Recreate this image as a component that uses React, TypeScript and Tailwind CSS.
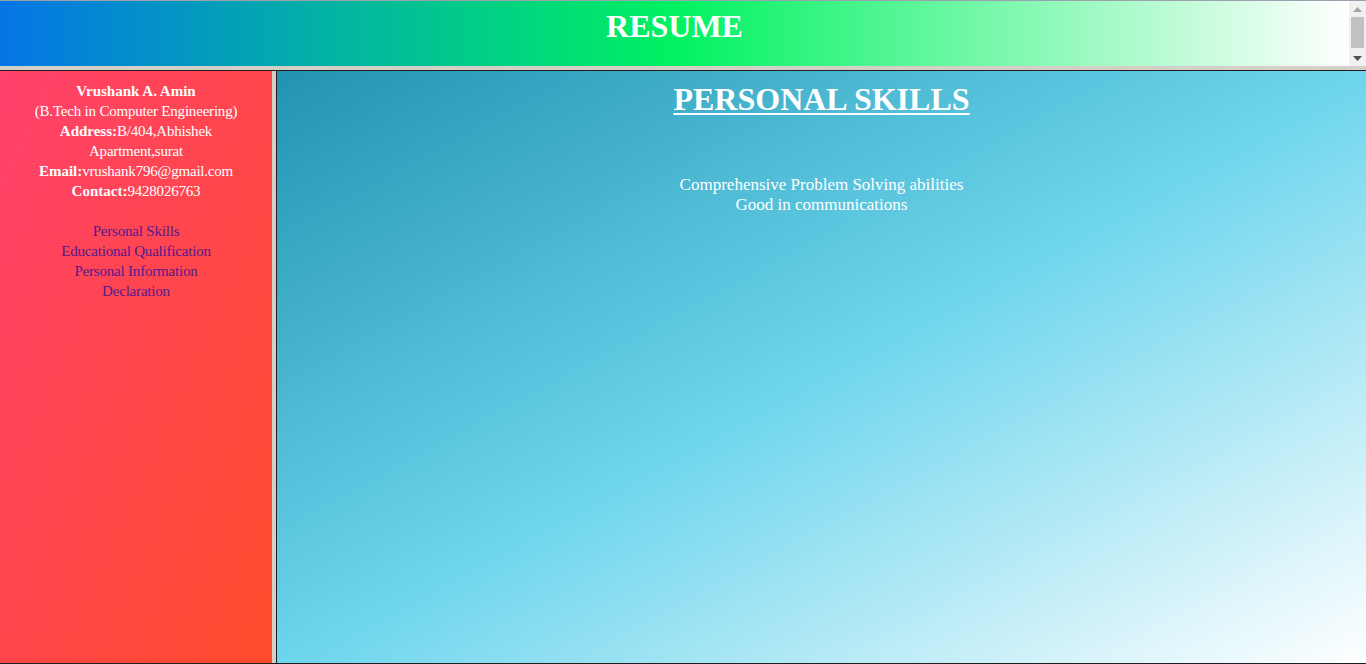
const links = [
  'Personal Skills',
  'Educational Qualification',
  'Personal Information',
  'Declaration',
];

const skills = ['Comprehensive Problem Solving abilities', 'Good in communications'];

function Scrollbar() {
  return (
    <div className="w-[17px] bg-[#f0f0f0] flex flex-col items-center">
      <div className="h-[16px] flex items-center justify-center">
        <svg width="9" height="5" viewBox="0 0 9 5">
          <path d="M0 5 L4.5 0 L9 5 Z" fill="#a3a3a3" />
        </svg>
      </div>
      <div className="w-[13px] h-[31px] bg-[#c1c1c1]" />
      <div className="flex-1" />
      <div className="h-[16px] flex items-center justify-center">
        <svg width="9" height="5" viewBox="0 0 9 5">
          <path d="M0 0 L9 0 L4.5 5 Z" fill="#505050" />
        </svg>
      </div>
    </div>
  );
}

export default function App() {
  return (
    <div className="w-[1366px] h-[664px] flex flex-col bg-[#d4d0c8] overflow-hidden font-['Liberation_Serif',serif] text-white">
      {/* top frame */}
      <div className="h-[66px] flex border-t border-[#9aa3ad]">
        <div className="flex-1 bg-[linear-gradient(to_right,#0575e6,#00f260,#ffffff)] pt-[7px] text-center">
          <h1 className="text-[32px] font-bold leading-[37px]">RESUME</h1>
        </div>
        <Scrollbar />
      </div>
      <div className="h-[4px] bg-[#d4d0c8]" />
      <div className="h-px bg-[#1e1e1e]" />

      <div className="flex-1 flex min-h-0">
        {/* left frame */}
        <div className="w-[272px] bg-[linear-gradient(to_bottom_right,#ff416c,#ff4b2b)] pt-[10px] px-[14px] text-center text-[15px] leading-[20px] tracking-[-0.2px]">
          <p className="font-bold tracking-normal">Vrushank A. Amin</p>
          <p>(B.Tech in Computer Engineering)</p>
          <p>
            <b className="tracking-normal">Address:</b>B/404,Abhishek Apartment,surat
          </p>
          <p>
            <b className="tracking-normal">Email:</b>vrushank796@gmail.com
          </p>
          <p>
            <b className="tracking-normal">Contact:</b>9428026763
          </p>
          <div className="mt-[20px] flex flex-col">
            {links.map((l) => (
              <a key={l} href="#" className="text-[#551a8b]">
                {l}
              </a>
            ))}
          </div>
        </div>
        <div className="w-[4px] bg-[#d4d0c8]" />
        <div className="w-px bg-[#1e1e1e]" />

        {/* right frame */}
        <div className="flex-1 bg-[linear-gradient(to_bottom_right,#2193b0,#6dd5ed,#ffffff)] pt-[10px] text-center">
          <h1 className="text-[32px] font-bold leading-[37px] underline decoration-[2px] underline-offset-[3px]">
            PERSONAL SKILLS
          </h1>
          <div className="mt-[57px] text-[17px] leading-[20px]">
            {skills.map((s) => (
              <p key={s}>{s}</p>
            ))}
          </div>
        </div>
      </div>
      <div className="h-px bg-[#1e1e1e]" />
    </div>
  );
}
